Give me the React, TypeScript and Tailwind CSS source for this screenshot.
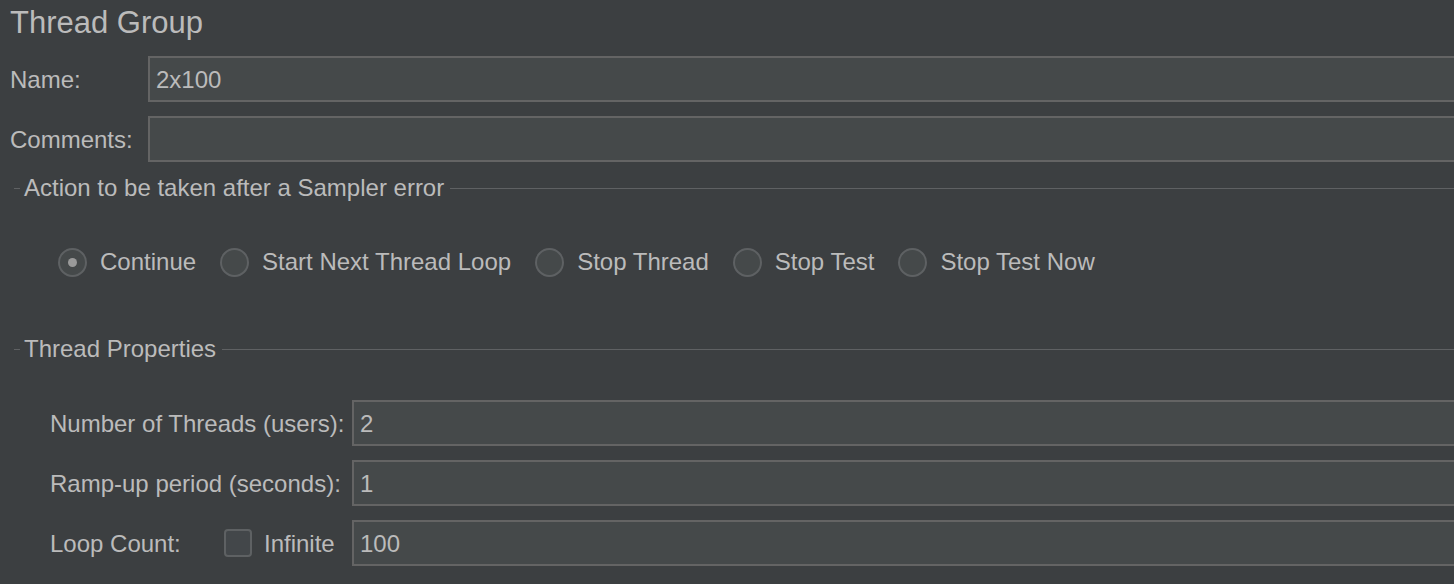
const font = { fontFamily: '"Liberation Sans", Arial, sans-serif' };

function Input({ value }: { value?: string }) {
  return (
    <div className="flex-1 h-[46px] bg-[#45494a] border-2 border-r-0 border-[#646464] flex items-center pl-[6px] pt-[2px] text-[#bbbbbb]">
      {value}
    </div>
  );
}

function SectionTitle({ title }: { title: string }) {
  return (
    <div className="flex items-center h-[24px]">
      <div className="ml-[14px] w-[6px] h-px bg-[#5f6163]" />
      <span className="ml-[4px] mr-[6px] whitespace-nowrap">{title}</span>
      <div className="flex-1 h-px bg-[#5f6163]" />
    </div>
  );
}

function Radio({ label, checked }: { label: string; checked?: boolean }) {
  return (
    <div className="flex items-center">
      <div className="w-[29px] h-[29px] rounded-full border-2 border-[#5e6163] bg-[#45494a] flex items-center justify-center">
        {checked && <div className="w-[9px] h-[9px] rounded-full bg-[#9a9a9a]" />}
      </div>
      <span className="ml-[13px] whitespace-nowrap">{label}</span>
    </div>
  );
}

export default function App() {
  return (
    <div
      className="w-[1454px] h-[584px] bg-[#3c3f41] text-[#bbbbbb] text-[24px] overflow-hidden flex flex-col"
      style={font}
    >
      {/* Header */}
      <div className="h-[46px] pl-[10px] text-[31px] leading-[46px]">Thread Group</div>

      <div className="mt-[10px] flex items-center">
        <span className="w-[148px] pl-[10px] pt-[2px]">Name:</span>
        <Input value="2x100" />
      </div>
      <div className="mt-[14px] flex items-center">
        <span className="w-[148px] pl-[10px] pt-[2px]">Comments:</span>
        <Input />
      </div>

      {/* Sampler error */}
      <div className="mt-[14px]">
        <SectionTitle title="Action to be taken after a Sampler error" />
      </div>
      <div className="mt-[47px] pl-[58px] flex items-center gap-[24px] h-[30px]">
        <Radio label="Continue" checked />
        <Radio label="Start Next Thread Loop" />
        <Radio label="Stop Thread" />
        <Radio label="Stop Test" />
        <Radio label="Stop Test Now" />
      </div>

      {/* Thread properties */}
      <div className="mt-[60px]">
        <SectionTitle title="Thread Properties" />
      </div>
      <div className="mt-[39px] pl-[50px] flex flex-col gap-[14px]">
        <div className="flex items-center">
          <span className="w-[302px] whitespace-nowrap pt-[2px]">Number of Threads (users):</span>
          <Input value="2" />
        </div>
        <div className="flex items-center">
          <span className="w-[302px] whitespace-nowrap pt-[2px]">Ramp-up period (seconds):</span>
          <Input value="1" />
        </div>
        <div className="flex items-center">
          <span className="w-[174px] whitespace-nowrap pt-[2px]">Loop Count:</span>
          <div className="w-[28px] h-[28px] rounded-[4px] border-2 border-[#5e6163] bg-[#43474a]" />
          <span className="ml-[12px] w-[88px] whitespace-nowrap pt-[2px]">Infinite</span>
          <Input value="100" />
        </div>
      </div>
    </div>
  );
}
